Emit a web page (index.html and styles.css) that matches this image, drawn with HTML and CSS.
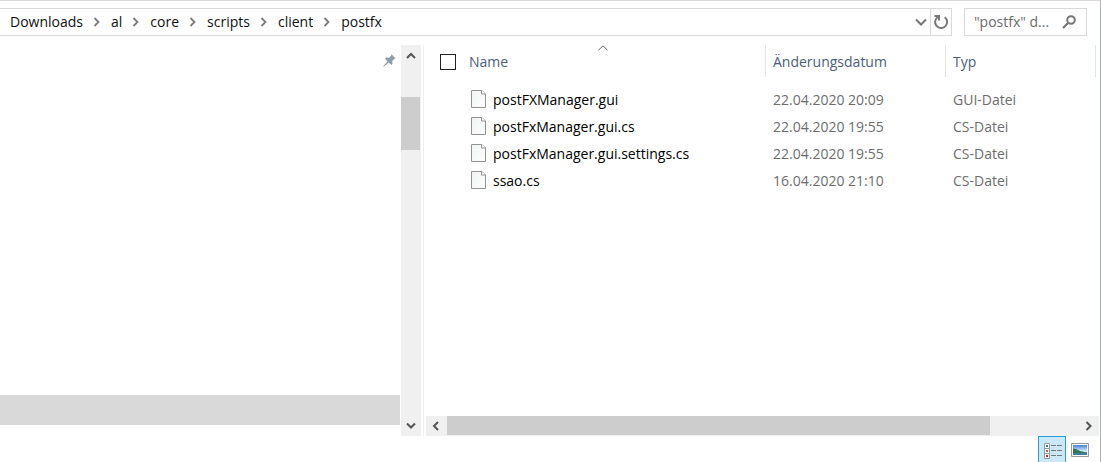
FILE: index.html
```html
<!DOCTYPE html>
<html lang="de">
<head>
<meta charset="utf-8">
<title>postfx</title>
<link rel="stylesheet" href="styles.css">
</head>
<body>
<svg class="defs" aria-hidden="true">
  <defs>
    <linearGradient id="paper" x1="0" y1="0" x2="1" y2="1"><stop offset="0" stop-color="#f2f4f4"/><stop offset="1" stop-color="#fdfdfd"/></linearGradient>
    <linearGradient id="sky" x1="0" y1="0" x2="0" y2="1"><stop offset="0" stop-color="#3f83dc"/><stop offset="0.6" stop-color="#d3e9fb"/></linearGradient>
    <symbol id="sep" viewBox="0 0 7 10"><path d="M1 1l4 4-4 4" fill="none" stroke="#7d7d7d" stroke-width="1.8"/></symbol>
    <symbol id="file" viewBox="0 0 15 18"><path d="M.5.5h10.500l3.500 3.500v13.500h-14z" fill="url(#paper)" stroke="#929292"/><path d="M10.500.5v3.500h4" fill="#fff" stroke="#929292"/></symbol>
  </defs>
</svg>
<div class="window">
  <header class="toolbar">
    <div class="address">
      <nav class="crumbs" aria-label="Pfad">
        <a class="crumb" href="#">Downloads</a><svg class="sep"><use href="#sep"/></svg>
        <a class="crumb" href="#">al</a><svg class="sep"><use href="#sep"/></svg>
        <a class="crumb" href="#">core</a><svg class="sep"><use href="#sep"/></svg>
        <a class="crumb" href="#">scripts</a><svg class="sep"><use href="#sep"/></svg>
        <a class="crumb" href="#">client</a><svg class="sep"><use href="#sep"/></svg>
        <a class="crumb" href="#">postfx</a>
      </nav>
      <button class="tool" aria-label="Verlauf"><svg width="12" height="8" viewBox="0 0 12 8"><path d="M1 1.500l5 5 5-5" fill="none" stroke="#777" stroke-width="2"/></svg></button>
      <button class="tool refresh" aria-label="Aktualisieren"><svg width="16" height="16" viewBox="0 0 16 16"><path d="M11.700 3.200A6 6 0 1 1 4.800 3" fill="none" stroke="#777" stroke-width="2"/><path d="M1.500 2h4.500v4.500" fill="none" stroke="#777" stroke-width="2"/></svg></button>
    </div>
    <div class="search">
      <input class="search-input" type="text" aria-label="Suchen" placeholder="&quot;postfx&quot; d...">
      <svg width="14" height="14" viewBox="0 0 14 14"><circle cx="9" cy="5" r="3.800" fill="none" stroke="#777" stroke-width="2"/><path d="M6.300 7.700L1 13" stroke="#777" stroke-width="2.200"/></svg>
    </div>
  </header>
  <main class="panes">
    <aside class="tree">
      <svg class="pin" width="13" height="13" viewBox="0 0 13 13"><path d="M8.500.3l4.200 4.200-1.500.4-1.900 2.200.2 3-1.200 1L5.600 8.400 1.400 12.300.3 12.800l.4-1.200 3.900-4.200L2 4.700l1-1.200 3 .2L8.100 1.800z" fill="#919da6"/></svg>
      <div class="selected"></div>
    </aside>
    <div class="vbar">
      <button class="arrow" aria-label="Nach oben"><svg width="10" height="8" viewBox="0 0 10 8"><path d="M1 6l4-4 4 4" fill="none" stroke="#555" stroke-width="2"/></svg></button>
      <div class="vtrack"><div class="vthumb"></div></div>
      <button class="arrow" aria-label="Nach unten"><svg width="10" height="8" viewBox="0 0 10 8"><path d="M1 1.500l4 4 4-4" fill="none" stroke="#555" stroke-width="2"/></svg></button>
    </div>
    <section class="content">
      <table class="files">
        <colgroup><col><col class="col-date"><col class="col-type"><col class="col-end"></colgroup>
        <thead>
          <tr>
            <th scope="col"><div class="name-head"><input class="check" type="checkbox" aria-label="Alle auswählen"><span>Name</span></div><svg class="sort" width="10" height="6" viewBox="0 0 10 6"><path d="M.5 5.200L5 .8l4.500 4.400" fill="none" stroke="#666"/></svg></th>
            <th scope="col">Änderungsdatum</th>
            <th scope="col">Typ</th>
            <td></td>
          </tr>
        </thead>
        <tbody>
          <tr><td class="name"><div class="file"><svg class="icon"><use href="#file"/></svg>postFXManager.gui</div></td><td>22.04.2020 20:09</td><td>GUI-Datei</td><td></td></tr>
          <tr><td class="name"><div class="file"><svg class="icon"><use href="#file"/></svg>postFxManager.gui.cs</div></td><td>22.04.2020 19:55</td><td>CS-Datei</td><td></td></tr>
          <tr><td class="name"><div class="file"><svg class="icon"><use href="#file"/></svg>postFxManager.gui.settings.cs</div></td><td>22.04.2020 19:55</td><td>CS-Datei</td><td></td></tr>
          <tr><td class="name"><div class="file"><svg class="icon"><use href="#file"/></svg>ssao.cs</div></td><td>16.04.2020 21:10</td><td>CS-Datei</td><td></td></tr>
        </tbody>
      </table>
      <div class="hbar">
        <button class="arrow" aria-label="Nach links"><svg width="10" height="10" viewBox="0 0 10 10"><path d="M6 1L2 5l4 4" fill="none" stroke="#555" stroke-width="2"/></svg></button>
        <div class="htrack"><div class="hthumb"></div></div>
        <button class="arrow" aria-label="Nach rechts"><svg width="8" height="10" viewBox="0 0 8 10"><path d="M1.500 1l4 4-4 4" fill="none" stroke="#555" stroke-width="2"/></svg></button>
      </div>
    </section>
  </main>
  <footer class="status">
    <button class="view active" aria-label="Details"><svg width="18" height="16" viewBox="0 0 18 16"><g fill="#fff" stroke="#999"><path d="M.5.5h5v5h-5zM.5 5.500h5v5h-5zM.5 10.500h5v5h-5z"/></g><path d="M2 2h2v2H2z" fill="#287f9d"/><path d="M2 7h2v2H2z" fill="#a46b35"/><path d="M2 12h2v2H2z" fill="#c52b18"/><path d="M7 2.500h5m1 0h5M7 7.500h5m1 0h5M7 12.500h5m1 0h5" stroke="#777"/></svg></button>
    <button class="view" aria-label="Miniaturansicht"><svg width="18" height="14" viewBox="0 0 18 14"><path d="M.5.5h17v13H.5z" fill="#fff" stroke="#999"/><path d="M2 2h14v10H2z" fill="url(#sky)"/><path d="M2 5.500l3 .5 4 2 7 1.500v.5H2z" fill="#387552"/><path d="M2 10l14-.5V12H2z" fill="#427f9c"/></svg></button>
  </footer>
</div>
</body>
</html>
```
FILE: styles.css
```css
* { box-sizing: border-box; }
body {
  margin: 0;
  background: #fff;
  color: #111;
  font: 14px/20px "Open Sans", "Noto Sans", sans-serif;
}
button { padding: 0; border: 0; background: none; display: flex; align-items: center; justify-content: center; }
.defs { position: absolute; width: 0; height: 0; }
.window {
  display: flex;
  flex-direction: column;
  height: 100vh;
  overflow: hidden;
  border-top: 1px solid #d9d9d9;
  border-right: 1px solid #a9b3bd;
}
.toolbar { display: flex; gap: 12px; padding: 7px 13px 9px 0; }
.address { flex: 1; display: flex; height: 28px; border: 1px solid #d9d9d9; border-left: 0; }
.crumbs { flex: 1; display: flex; align-items: center; gap: 10px; padding-left: 10px; }
.crumb { color: inherit; text-decoration: none; }
.sep { width: 8px; height: 10px; }
.tool { width: 18px; }
.refresh { width: 21px; border-left: 1px solid #d9d9d9; }
.search { display: flex; align-items: center; width: 123px; height: 28px; padding: 0 10px 0 9px; border: 1px solid #d9d9d9; }
.search-input { flex: 1; min-width: 0; padding: 0; border: 0; outline: 0; background: none; font: inherit; }
.search-input::placeholder { color: #6d6d6d; opacity: 1; }
.panes { flex: 1; min-height: 0; display: flex; }
.tree { width: 400px; display: flex; flex-direction: column; justify-content: space-between; padding: 9px 0 11px; }
.pin { align-self: flex-end; margin-right: 4px; }
.selected { height: 30px; background: #d9d9d9; }
.vbar { display: flex; flex-direction: column; width: 20px; margin-left: 1px; background: #f0f0f0; }
.vbar .arrow { height: 21px; }
.vtrack { flex: 1; padding-top: 31px; }
.vthumb { width: 19px; height: 53px; background: #cdcdcd; }
.content { flex: 1; min-width: 0; display: flex; flex-direction: column; justify-content: space-between; margin-left: 2px; padding: 0 1px 0 2px; border-left: 1px solid #f0f0f0; }
.files { width: 100%; table-layout: fixed; border-collapse: separate; border-spacing: 0; }
.col-date { width: 180px; }
.col-type { width: 150px; }
.col-end { width: 3px; }
.files th { position: relative; height: 32px; padding: 1px 0 0 7px; border-right: 1px solid #e5e5e5; color: #4c607a; font-weight: 400; text-align: left; }
.files td { height: 27px; padding: 0 0 0 7px; color: #6d6d6d; }
.files thead td, .files td:last-child { padding: 0; }
.files tbody::before { content: ""; display: block; height: 9px; }
.name-head { display: flex; align-items: center; gap: 13px; padding-left: 7px; }
.check { appearance: none; width: 16px; height: 16px; margin: 0; border: 1px solid #222; }
.sort { position: absolute; top: 0; left: calc(50% + 2px); }
.files .name { padding-left: 45px; color: #000; }
.file { display: flex; align-items: flex-start; gap: 7px; }
.icon { width: 15px; height: 18px; }
.hbar { display: flex; height: 20px; background: #f0f0f0; }
.hbar .arrow { width: 21px; }
.htrack { flex: 1; }
.hthumb { width: 86%; height: 19px; background: #cdcdcd; }
.status { display: flex; height: 26px; justify-content: flex-end; padding-right: 6px; }
.view { width: 28px; height: 28px; }
.view.active { padding: 2px 0 0 2px; border: 1px solid #26a0da; background: #cce8f6; }
```
